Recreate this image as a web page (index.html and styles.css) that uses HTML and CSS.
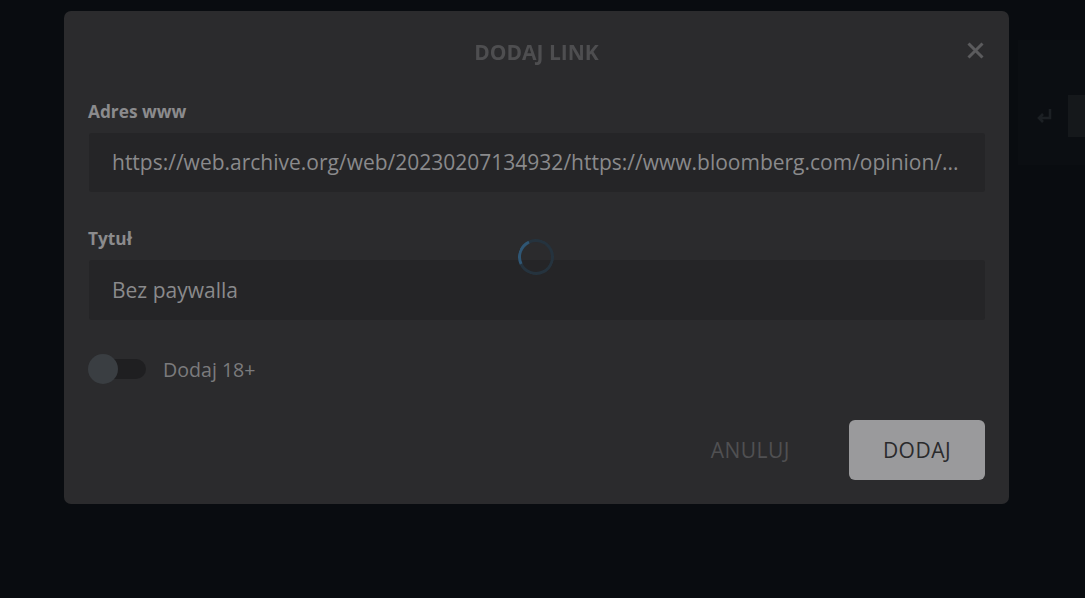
FILE: index.html
```html
<!DOCTYPE html>
<html lang="pl">
<head>
<meta charset="utf-8">
<title>Dodaj link</title>
<link rel="stylesheet" href="styles.css">
</head>
<body>
<div class="page">
  <div class="page-strip">
    <div class="strip-row">
      <svg class="enter-icon" width="20" height="20" viewBox="0 0 20 20"><path d="M16 3 V12 H5 M9 8 L5 12 L9 16" fill="none" stroke="currentColor" stroke-width="2.6"/></svg>
      <div class="strip-box"></div>
    </div>
  </div>
</div>
<div class="overlay">
  <div class="modal">
    <div class="modal-header">
      <h2 class="modal-title">DODAJ LINK</h2>
      <button class="close-btn" aria-label="Zamknij">
        <svg width="17" height="17" viewBox="0 0 17 17"><path d="M1.5 1.5 L15.5 15.5 M15.5 1.5 L1.5 15.5" stroke="currentColor" stroke-width="3" fill="none"/></svg>
      </button>
    </div>
    <div class="field">
      <label class="field-label">Adres www</label>
      <div class="field-input">https://web.archive.org/web/20230207134932/https://www.bloomberg.com/opinion/...</div>
    </div>
    <div class="field field-title">
      <label class="field-label">Tytuł</label>
      <div class="field-input field-input-tall">Bez paywalla</div>
    </div>
    <div class="toggle-row">
      <span class="toggle"><span class="toggle-knob"></span></span>
      <span class="toggle-label">Dodaj 18+</span>
    </div>
    <div class="actions">
      <button class="btn-cancel">ANULUJ</button>
      <button class="btn-add">DODAJ</button>
    </div>
    <div class="spinner"></div>
  </div>
</div>
</body>
</html>
```
FILE: styles.css
```css
* { box-sizing: border-box; }
html, body {
  margin: 0;
  padding: 0;
  width: 1085px;
  height: 598px;
  overflow: hidden;
  background: #090c10;
  font-family: "Open Sans", "Noto Sans", sans-serif;
}
.page {
  width: 1085px;
  height: 598px;
  display: flex;
  justify-content: flex-end;
  padding-top: 40px;
}
.page-strip {
  width: 67px;
  height: 125px;
  background: #0b0e12;
  padding-top: 55px;
}
.strip-row {
  display: flex;
  align-items: center;
  justify-content: flex-end;
  gap: 14px;
}
.enter-icon { color: #1c2024; }
.strip-box {
  width: 17px;
  height: 42px;
  background: #15181b;
}
.overlay {
  position: fixed;
  inset: 0;
  padding: 11px 0 0 64px;
}
.modal {
  position: relative;
  width: 945px;
  height: 493px;
  background: #2b2b2d;
  border-radius: 7px;
  padding: 0 24px 24px;
  display: flex;
  flex-direction: column;
}
.modal-header {
  height: 82px;
  display: flex;
  align-items: center;
  justify-content: center;
  position: relative;
}
.modal-title {
  margin: 0;
  font-size: 21px;
  font-weight: 700;
  color: #4e4e50;
}
.close-btn {
  position: absolute;
  right: 1px;
  top: 31px;
  background: none;
  border: 0;
  padding: 0;
  color: #5b5b5d;
  display: flex;
}
.field {
  display: flex;
  flex-direction: column;
  margin-top: 7px;
}
.field-title { margin-top: 35px; }
.field-label {
  font-size: 17.3px;
  font-weight: 700;
  line-height: 24px;
  color: #8b8b8d;
}
.field-input {
  margin-top: 9px;
  margin-left: 1px;
  height: 59px;
  line-height: 59px;
  background: #252527;
  border-radius: 3px;
  padding: 0 20px 0 23px;
  font-size: 21px;
  color: #8a8a8c;
  white-space: nowrap;
  overflow: hidden;
}
.field-input-tall {
  height: 60px;
  line-height: 60px;
}
.toggle-row {
  margin-top: 34px;
  display: flex;
  align-items: center;
  height: 30px;
}
.toggle {
  position: relative;
  width: 57px;
  height: 20px;
  margin-left: 1px;
  background: #1f1f21;
  border-radius: 10px;
  display: flex;
  align-items: center;
}
.toggle-knob {
  width: 30px;
  height: 30px;
  border-radius: 50%;
  background: #3a3e42;
  margin-left: -1px;
}
.toggle-label {
  margin-left: 17px;
  font-size: 19.6px;
  color: #7b7b7d;
}
.actions {
  margin-top: auto;
  display: flex;
  justify-content: flex-end;
  align-items: center;
  gap: 38px;
}
.btn-cancel, .btn-add {
  font-family: inherit;
  font-size: 21px;
  letter-spacing: 0.5px;
  border: 0;
  height: 60px;
  cursor: pointer;
}
.btn-cancel {
  background: none;
  color: #505052;
  padding: 0 21px;
}
.btn-add {
  width: 136px;
  background: #9a9a9c;
  color: #2a2a2c;
  border-radius: 6px;
}
.spinner {
  position: absolute;
  left: 454px;
  top: 228px;
  width: 36px;
  height: 36px;
  border-radius: 50%;
  border: 3px solid #25333e;
  border-left-color: #2f5674;
  transform: rotate(20deg);
}
```
